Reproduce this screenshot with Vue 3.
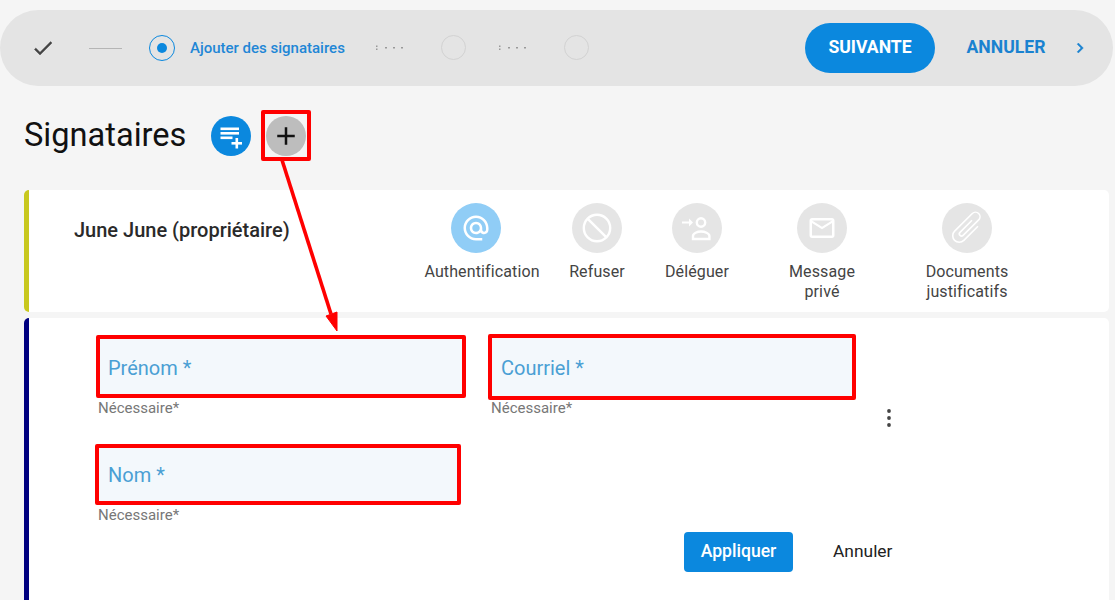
<script setup>
const actions = [
  { key: 'auth', lines: ['Authentification'], active: true },
  { key: 'refuse', lines: ['Refuser'] },
  { key: 'delegate', lines: ['Déléguer'] },
  { key: 'message', lines: ['Message', 'privé'] },
  { key: 'docs', lines: ['Documents', 'justificatifs'] }
]
</script>

<template>
  <div class="page">
    <header class="stepper">
      <svg class="check" viewBox="0 0 24 24" width="24" height="24"><path fill="#444" stroke="#444" stroke-width="0.4" d="M9 16.17L4.83 12l-1.41 1.41L9 19 21 7l-1.41-1.41z"/></svg>
      <span class="done-line"></span>
      <span class="radio"><span class="radio-dot"></span></span>
      <span class="step-label">Ajouter des signataires</span>
      <svg class="dots" width="28" height="6" viewBox="0 0 28 6"><rect x="0" y="0.5" width="1.5" height="1.5" fill="#999"/><rect x="0" y="3.5" width="1.5" height="1.5" fill="#999"/><rect x="9" y="2" width="2" height="1.5" fill="#999"/><rect x="17" y="2" width="2" height="1.5" fill="#999"/><rect x="25" y="2" width="2" height="1.5" fill="#999"/></svg>
      <span class="step-circle first"></span>
      <svg class="dots second" width="28" height="6" viewBox="0 0 28 6"><rect x="0" y="0.5" width="1.5" height="1.5" fill="#999"/><rect x="0" y="3.5" width="1.5" height="1.5" fill="#999"/><rect x="9" y="2" width="2" height="1.5" fill="#999"/><rect x="17" y="2" width="2" height="1.5" fill="#999"/><rect x="25" y="2" width="2" height="1.5" fill="#999"/></svg>
      <span class="step-circle last"></span>
      <button class="next">SUIVANTE</button>
      <button class="cancel">ANNULER</button>
      <svg class="chevron" viewBox="0 0 24 24" width="20" height="20"><path fill="#1a82d0" stroke="#1a82d0" stroke-width="0.5" d="M10 6L8.59 7.41 13.17 12l-4.58 4.59L10 18l6-6z"/></svg>
    </header>

    <section class="title-row">
      <h1>Signataires</h1>
      <span class="round blue">
        <svg viewBox="0 0 40 40" width="40" height="40"><g fill="#fff"><rect x="9.5" y="11.5" width="18.5" height="2.6"/><rect x="9.5" y="16" width="18.5" height="2.6"/><rect x="9.5" y="20.5" width="12" height="2.6"/><rect x="20.5" y="26" width="10.5" height="2.6"/><rect x="24.5" y="22" width="2.6" height="10.5"/></g></svg>
      </span>
      <span class="plus-mark">
        <span class="round grey">
          <svg viewBox="0 0 24 24" width="30" height="30"><path fill="#111" d="M19 13h-6v6h-2v-6H5v-2h6V5h2v6h6v2z"/></svg>
        </span>
      </span>
    </section>

    <section class="card owner">
      <div class="owner-name">June June (propriétaire)</div>
      <div class="actions">
        <div v-for="a in actions" :key="a.key" class="action" :class="a.key">
          <span class="action-circle" :class="{ active: a.active }">
            <svg v-if="a.key === 'auth'" viewBox="0 0 24 24" width="30" height="30"><path fill="#fff" d="M12 2C6.48 2 2 6.48 2 12s4.48 10 10 10h5v-2h-5c-4.34 0-8-3.66-8-8s3.66-8 8-8 8 3.66 8 8v1.43c0 .79-.71 1.57-1.5 1.57s-1.5-.78-1.5-1.57V12c0-2.76-2.24-5-5-5s-5 2.24-5 5 2.24 5 5 5c1.38 0 2.64-.56 3.54-1.47.65.89 1.77 1.47 2.96 1.47 1.97 0 3.5-1.6 3.5-3.57V12c0-5.52-4.48-10-10-10zm0 13c-1.66 0-3-1.34-3-3s1.34-3 3-3 3 1.34 3 3-1.34 3-3 3z"/></svg>
            <svg v-else-if="a.key === 'refuse'" viewBox="0 0 50 50" width="50" height="50"><circle cx="25" cy="25" r="13.2" fill="none" stroke="#fff" stroke-width="2.4"/><path d="M15.8 15.8L34.2 34.2" stroke="#fff" stroke-width="2.4"/></svg>
            <svg v-else-if="a.key === 'delegate'" viewBox="0 0 50 50" width="50" height="50"><circle cx="29" cy="19.5" r="4.2" fill="none" stroke="#fff" stroke-width="2.4"/><path fill="none" stroke="#fff" stroke-width="2.4" d="M21 36v-3c0-2.6 4.4-4.5 8-4.5s8.4 1.9 8.4 4.5v3z"/><path fill="#fff" d="M10 18.4h7v-2.8l4 3.9-4 3.9v-2.8h-7z"/></svg>
            <svg v-else-if="a.key === 'message'" viewBox="0 0 24 24" width="30" height="30"><path fill="#fff" d="M20 4H4c-1.1 0-2 .9-2 2v12c0 1.1.9 2 2 2h16c1.1 0 2-.9 2-2V6c0-1.1-.9-2-2-2zm0 14H4V8l8 5 8-5v10zm-8-7L4 6h16l-8 5z"/></svg>
            <svg v-else viewBox="0 0 50 50" width="50" height="50" class="clip"><path fill="none" stroke="#fff" stroke-width="1.6" d="M31.5 16V36a6.5 6.5 0 0 1-13 0V11a4.5 4.5 0 0 1 9 0V33a2.2 2.2 0 0 1-4.4 0V16"/></svg>
          </span>
          <span class="action-label"><span v-for="l in a.lines" :key="l" class="line">{{ l }}</span></span>
        </div>
      </div>
    </section>

    <section class="card signer">
      <div class="row top">
        <div class="col prenom">
          <div class="field">Prénom *</div>
          <div class="help">Nécessaire*</div>
        </div>
        <div class="col courriel">
          <div class="field">Courriel *</div>
          <div class="help">Nécessaire*</div>
        </div>
        <svg class="kebab" viewBox="0 0 4 20" width="4" height="20"><circle cx="2" cy="3" r="1.9" fill="#444"/><circle cx="2" cy="10" r="1.9" fill="#444"/><circle cx="2" cy="17" r="1.9" fill="#444"/></svg>
      </div>
      <div class="row">
        <div class="col nom">
          <div class="field">Nom *</div>
          <div class="help">Nécessaire*</div>
        </div>
      </div>
      <div class="form-actions">
        <button class="apply">Appliquer</button>
        <button class="discard">Annuler</button>
      </div>
    </section>

    <svg class="arrow" width="1115" height="600" viewBox="0 0 1115 600">
      <path d="M282 160L331 314" stroke="#f00" stroke-width="3.6" fill="none"/>
      <path d="M326 316L337 312L337 331z" fill="#f00" stroke="#f00" stroke-width="1"/>
    </svg>
  </div>
</template>

<style>
html, body { margin: 0; background: #f5f5f5; }
</style>

<style scoped>
.page {
  position: relative;
  width: 1115px;
  height: 600px;
  overflow: hidden;
  padding-top: 10px;
  box-sizing: border-box;
  background: #f5f5f5;
  font-family: Roboto, "Liberation Sans", sans-serif;
  color: #2a2a2a;
}
button { font-family: inherit; border: 0; cursor: pointer; padding: 0; background: none; }

.stepper {
  display: flex;
  align-items: center;
  width: 1113px;
  height: 76px;
  box-sizing: border-box;
  padding-left: 31px;
  background: #e4e4e4;
  border-radius: 38px;
}
.check { flex: none; margin-top: -1px; }
.done-line { width: 33px; height: 1px; background: #b5b5b5; margin: 1px 0 0 34px; }
.radio {
  display: flex; align-items: center; justify-content: center;
  width: 26px; height: 26px; margin: -1px 0 0 27px;
  box-sizing: border-box;
  border: 1.5px solid #0b88de; border-radius: 50%;
}
.radio-dot { width: 10px; height: 10px; border-radius: 50%; background: #0b88de; }
.step-label { margin-left: 15px; width: 186px; font-size: 15px; font-weight: 500; color: #1f87d6; white-space: nowrap; }
.dots { flex: none; }
.step-circle { width: 25px; height: 25px; margin-top: -1px; box-sizing: border-box; border: 1.5px solid #d2d2d2; border-radius: 50%; }
.step-circle.first { margin-left: 37px; }
.dots.second { margin-left: 33px; }
.step-circle.last { margin-left: 37px; }
.next {
  width: 130px; height: 50px; margin-left: 216px; padding-bottom: 2px;
  border-radius: 25px; background: #0b88de; color: #fff;
  font-size: 17.6px; font-weight: 700;
}
.cancel { width: 80px; margin-left: 31px; padding-bottom: 2px; color: #1a82d0; font-size: 17.6px; font-weight: 700; white-space: nowrap; }
.chevron { margin-left: 24px; }

.title-row { display: flex; align-items: center; height: 51px; margin-top: 24px; padding-left: 24px; }
h1 { margin: 0 0 2px; width: 187px; font-size: 32.6px; font-weight: 400; color: #111; white-space: nowrap; }
.round { display: flex; align-items: center; justify-content: center; width: 40px; height: 40px; border-radius: 50%; }
.round.blue { background: #0b88de; }
.round.grey { background: #bdbdbd; }
.plus-mark {
  display: flex; align-items: center; justify-content: center;
  width: 50px; height: 51px; margin-left: 10px;
  box-sizing: border-box; border: 4px solid #f00; border-radius: 2px;
}

.card {
  width: 1085px; margin-left: 24px;
  box-sizing: border-box;
  background: #fff; border-radius: 5px;
}
.owner { display: flex; height: 122px; margin-top: 29px; border-left: 5px solid #c8c81e; }
.owner-name { flex: 0 0 396px; box-sizing: border-box; padding: 28px 0 0 45px; font-size: 20px; font-weight: 500; line-height: 24px; color: #2a2a2a; white-space: nowrap; }
.actions { display: flex; padding-top: 13px; }
.action { display: flex; flex-direction: column; align-items: center; }
.action-circle { display: flex; align-items: center; justify-content: center; width: 50px; height: 50px; border-radius: 50%; background: #e5e5e5; }
.action-circle.active { background: #90cdf6; }
.action-label { margin-top: 9px; font-size: 16px; letter-spacing: 0.12px; line-height: 20px; color: #444; text-align: center; white-space: nowrap; }
.line { display: block; }
.clip { transform: rotate(45deg); }
.auth { width: 114px; }
.auth .action-circle { margin-right: 12px; }
.refuse { width: 54px; margin-left: 31px; }
.delegate { width: 64px; margin-left: 41px; }
.message { width: 66px; margin-left: 60px; }
.docs { width: 82px; margin-left: 71px; }

.signer { height: 300px; margin-top: 6px; padding-top: 16px; border-left: 5px solid #000080; }
.row { display: flex; align-items: flex-start; }
.row.top { height: 110px; }
.field {
  display: flex; align-items: center;
  box-sizing: border-box;
  padding-left: 8px;
  padding-top: 2px;
  background: #f3f8fc;
  border: 4px solid #f00; border-radius: 2px;
  font-size: 20px; color: #4a9fd4;
}
.help { margin-left: 2px; font-size: 15px; line-height: 18px; color: #777; }
.prenom { width: 370px; margin: 1px 0 0 67px; }
.prenom .field { height: 63px; padding-top: 2px; }
.prenom .help { margin-top: 1px; }
.courriel { width: 368px; margin-left: 22px; }
.courriel .field { height: 66px; padding-left: 9px; }
.courriel .help { margin: -1px 0 0 3px; }
.nom { width: 366px; margin-left: 66px; }
.nom .field { height: 61px; padding-left: 9px; padding-top: 0; }
.nom .help { margin: 1px 0 0 3px; }
.kebab { margin: 74px 0 0 31px; flex: none; }

.form-actions { display: flex; align-items: center; margin: 8px 0 0 655px; }
.apply { width: 109px; height: 40px; padding-bottom: 2px; border-radius: 4px; background: #0b88de; color: #fff; font-size: 17.6px; font-weight: 500; }
.discard { margin-left: 40px; padding-bottom: 2px; color: #222; font-size: 17.4px; font-weight: 400; }

.arrow { position: absolute; left: 0; top: 0; pointer-events: none; }
</style>
